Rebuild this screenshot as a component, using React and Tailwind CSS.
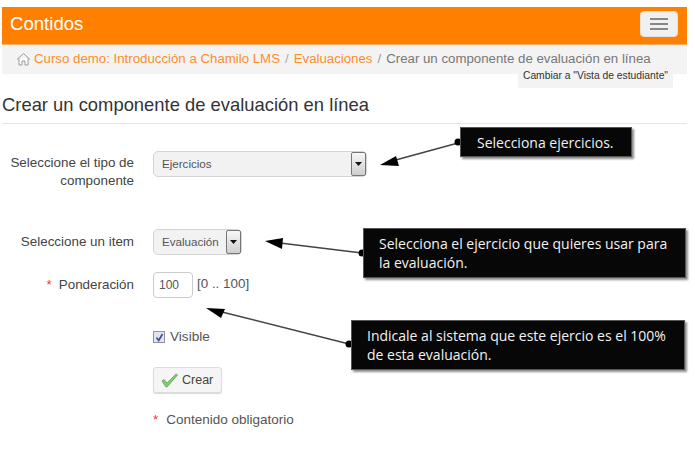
import React from 'react';

const font = "font-['Liberation_Sans',Arial,sans-serif]";

const Callout = ({ className, children }) => (
  <div className={`absolute bg-[#070707] text-[#f2f2f2] font-['Open_Sans',sans-serif] text-[14px] leading-[19px] border border-[#555] shadow-[2px_2px_2px_rgba(0,0,0,0.45)] ${className}`}>
    {children}
  </div>
);

const Select = ({ label, className, textClass }) => (
  <div className={`flex items-stretch rounded-[5px] border border-[#d4d4d4] bg-[#f2f2f2] text-[#555] text-[11.6px] ${className}`}>
    <span className={`flex-1 leading-none self-center ${textClass}`}>{label}</span>
    <span className="w-[15px] flex items-center justify-center border border-[#777] rounded-[2px] bg-gradient-to-b from-[#f7f7f7] to-[#cfcfcf]">
      <svg width="7" height="4" viewBox="0 0 7 4"><path d="M0 0h7L3.5 4z" fill="#111" /></svg>
    </span>
  </div>
);

const Row = ({ label, required, className, children }) => (
  <div className={`flex ${className}`}>
    <div className="w-[134px] text-right text-[13.4px] leading-[18px] text-[#444] shrink-0">
      {required && <span className="text-[#e33] mr-[7px]">*</span>}
      {label}
    </div>
    <div className="ml-[19px]">{children}</div>
  </div>
);

const Arrows = () => (
  <svg className="absolute left-0 top-0 pointer-events-none" width="695" height="450">
    <g stroke="#444" strokeWidth="1.4" fill="#000">
      <line x1="458" y1="143" x2="392" y2="161" />
      <line x1="362" y1="253" x2="280" y2="243" />
      <line x1="349" y1="344" x2="222" y2="312" />
    </g>
    <g fill="#000">
      <path d="M380 165 L396 156 L399 166 Z" />
      <path d="M265 241 L283 238 L282 249 Z" />
      <path d="M206 308 L225 309 L221 318 Z" />
      <circle cx="458" cy="142" r="3.5" />
      <circle cx="362" cy="253" r="3.5" />
      <circle cx="349" cy="344" r="3.5" />
    </g>
  </svg>
);

const App = () => {
  return (
    <div className={`relative w-[695px] h-[450px] bg-white overflow-hidden ${font}`}>
      <div className="pt-[7px] pl-[2px] pr-[8px]">
        <div className="h-[38px] bg-[#ff7f00] flex items-center justify-between pl-[8px] pr-[9px] pb-[3px] border-b border-[#fbb06a]">
          <span className="text-white text-[18.6px] leading-none">Contidos</span>
          <button className="w-[38px] h-[26px] rounded-[4px] bg-[#f0f0f0] border border-[#e2e2e2] flex flex-col items-center justify-center gap-[3px]">
            <span className="w-[18px] h-[2px] bg-[#888]" />
            <span className="w-[18px] h-[2px] bg-[#888]" />
            <span className="w-[18px] h-[2px] bg-[#888]" />
          </button>
        </div>
        <div className="h-[29px] bg-[#f3f3f3] flex items-center pl-[14px] pb-[1px] text-[13.25px] text-[#ff8c2a] whitespace-nowrap">
          <svg className="mr-[3px]" width="15" height="14" viewBox="0 0 15 14" fill="none" stroke="#999" strokeWidth="1">
            <path d="M1 7.5 7.5 1.5 14 7.5" />
            <path d="M3 6.5V13H6V9H9V13H12V6.5" fill="#fff" />
          </svg>
          <span>Curso demo: Introducción a Chamilo LMS</span>
          <span className="text-[#aaa] mx-[5px]">/</span>
          <span>Evaluaciones</span>
          <span className="text-[#999] mx-[5px]">/</span>
          <span className="text-[#777]">Crear un componente de evaluación en línea</span>
        </div>
      </div>

      <div className="mt-[20px] pl-[2px] pr-[8px]">
        <h1 className="text-[18.4px] leading-[22px] text-[#333] pb-[7px] border-b border-[#e5e5e5]">
          Crear un componente de evaluación en línea
        </h1>
      </div>

      <div className="pt-[27px] pr-[8px]">
        <Row label="Seleccione el tipo de componente" className="[&>div:first-child]:pt-[3px]">
          <Select label="Ejercicios" className="w-[214px] h-[26px]" textClass="pl-[8px]" />
        </Row>
        <Row label="Seleccione un item" className="mt-[39px] items-center">
          <Select label="Evaluación" className="w-[89px] h-[26px]" textClass="pl-[8px]" />
        </Row>
        <Row label="Ponderación" required className="mt-[17px] items-center">
          <div className="flex items-start">
            <div className="w-[40px] h-[26px] border border-[#ccc] rounded-[4px] text-[12px] text-[#555] pl-[5px] leading-[24px]">100</div>
            <span className="ml-[4px] text-[13.4px] text-[#555] leading-[20px] pt-[2px]">[0 .. 100]</span>
          </div>
        </Row>
        <Row className="mt-[29px]">
          <label className="flex items-center text-[13.6px] text-[#555] leading-[20px]">
            <span className="w-[12px] h-[12px] border border-[#8f93a3] bg-[#e3e5ee] flex items-center justify-center">
              <svg width="9" height="9" viewBox="0 0 9 9" fill="none" stroke="#3b4fa0" strokeWidth="1.7"><path d="M1.5 4.5 3.7 7.5 7.5 1" /></svg>
            </span>
            <span className="ml-[5px]">Visible</span>
          </label>
        </Row>
        <Row className="mt-[20px]">
          <button className="w-[69px] h-[26px] flex items-center rounded-[3px] border border-[#ddd] bg-[#f5f5f5] shadow-[0_1px_1px_rgba(0,0,0,0.15)] text-[12.5px] text-[#444] pl-[7px]">
            <svg width="17" height="15" viewBox="0 0 17 15">
              <path d="M1 8 3 6.5 6 10 15 1 16.5 2 6 14 4.5 13.5Z" fill="#7fd070" stroke="#4c9a40" strokeWidth="0.7" />
            </svg>
            <span className="ml-[4px]">Crear</span>
          </button>
        </Row>
        <Row className="mt-[17px]">
          <p className="text-[13.5px] text-[#555] leading-[20px] whitespace-nowrap">
            <span className="text-[#e33] mr-[8px]">*</span>Contenido obligatorio
          </p>
        </Row>
      </div>

      <div className="absolute left-[518px] top-[64px] w-[155px] h-[24px] bg-[#f3f3f3] text-[#333] text-[10.3px] flex items-center justify-center whitespace-nowrap">
        Cambiar a "Vista de estudiante"
      </div>

      <Arrows />

      <Callout className="left-[460px] top-[127px] w-[172px] h-[30px] pl-[16px] pt-[5px]">Selecciona ejercicios.</Callout>
      <Callout className="left-[363px] top-[228px] w-[323px] h-[50px] pl-[15px] pt-[5px]">Selecciona el ejercicio que quieres usar para<br />la evaluación.</Callout>
      <Callout className="left-[351px] top-[320px] w-[334px] h-[50px] pl-[15px] pt-[5px]">Indicale al sistema que este ejercio es el 100% de esta evaluación.</Callout>
    </div>
  );
};

export default App;
